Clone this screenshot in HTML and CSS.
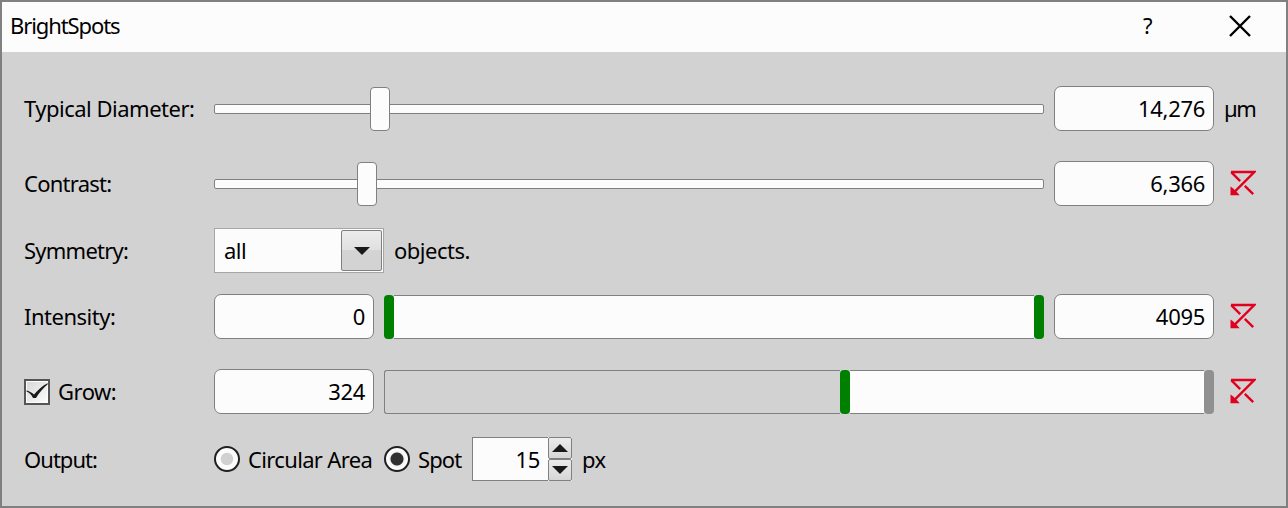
FILE: index.html
```html
<!DOCTYPE html>
<html lang="en">
<head>
<meta charset="utf-8">
<title>BrightSpots</title>
<link rel="stylesheet" href="styles.css">
</head>
<body>
<svg class="defs" width="0" height="0" aria-hidden="true">
  <symbol id="reset" viewBox="0 0 26 26">
    <path d="M1 2H24.3L5 21.300M1.200 2.200L10.200 11.200M14.800 15.800L23.200 24.200" fill="none" stroke="#e2001f" stroke-width="2.4"/>
    <path d="M.5 16.500V25.200H9.700L7.500 22.800L2.900 18.200Z" fill="#e2001f"/>
  </symbol>
</svg>
<div class="window">
  <header class="titlebar">
    <span class="title">BrightSpots</span>
    <span class="help">?</span>
    <svg class="close" width="22" height="22" viewBox="0 0 22 22"><path d="M1 1L21 21M21 1L1 21" stroke="#000" stroke-width="2.4" fill="none"/></svg>
  </header>
  <main class="form">
    <div class="row diameter">
      <label class="label t-typical">Typical Diameter:</label>
      <div class="slider"><div class="groove"></div><div class="thumb" style="left:156px"></div></div>
      <div class="field">14,276</div>
      <span class="unit">µm</span>
    </div>
    <div class="row contrast">
      <label class="label t-contrast">Contrast:</label>
      <div class="slider"><div class="groove"></div><div class="thumb" style="left:143px"></div></div>
      <div class="field">6,366</div>
      <svg class="reset"><use href="#reset"/></svg>
    </div>
    <div class="row symmetry">
      <label class="label t-symmetry">Symmetry:</label>
      <div class="combo"><span class="t-all">all</span><div class="drop"><svg width="16" height="8" viewBox="0 0 16 8"><path d="M0 0H16L8 8Z" fill="#1a1a1a"/></svg></div></div>
      <span class="t-objects">objects.</span>
    </div>
    <div class="row intensity">
      <label class="label t-intensity">Intensity:</label>
      <div class="field">0</div>
      <div class="range"><div class="handle"></div><div class="fill"></div><div class="handle"></div></div>
      <div class="field">4095</div>
      <svg class="reset"><use href="#reset"/></svg>
    </div>
    <div class="row grow">
      <label class="label check-label"><svg width="26" height="26" viewBox="0 0 26 26"><defs><linearGradient id="cb" x2="1" y2="1"><stop offset="0" stop-color="#d8d8d8"/><stop offset="1" stop-color="#fcfcfc"/></linearGradient></defs><rect x="1" y="1" width="24" height="24" fill="#fcfcfc" stroke="#555" stroke-width="2"/><rect x="3" y="3" width="20" height="20" fill="url(#cb)"/><path d="M2.5 11.5C5 12 7.5 13.5 10 15.5C14 11 18 7 23.5 4.2L24 5C19 9 15 14 12 19H9C7.500 16 5.500 13.500 2.500 12.500Z" fill="#1a1a1a"/></svg><span class="t-grow">Grow:</span></label>
      <div class="field">324</div>
      <div class="range"><div class="rest" style="width:456px"></div><div class="handle"></div><div class="fill"></div><div class="handle off"></div></div>
      <svg class="reset"><use href="#reset"/></svg>
    </div>
    <div class="row output">
      <label class="label t-output">Output:</label>
      <span class="radio"></span><span class="t-circular">Circular Area</span>
      <span class="radio on"></span><span class="t-spot">Spot</span>
      <div class="spin"><span class="value">15</span><div class="steps"><div class="step"><svg width="16" height="8" viewBox="0 0 16 8"><path d="M0 8H16L8 0Z" fill="#1a1a1a"/></svg></div><div class="step"><svg width="16" height="8" viewBox="0 0 16 8"><path d="M0 0H16L8 8Z" fill="#1a1a1a"/></svg></div></div></div>
      <span class="t-px">px</span>
    </div>
  </main>
</div>
</body>
</html>
```
FILE: styles.css
```css
* { box-sizing: border-box; }
body { margin: 0; font: 22px/45px "Noto Sans", Tahoma, sans-serif; color: #000; letter-spacing: -0.5px; white-space: nowrap; }
svg { display: block; flex: none; }
.defs { position: absolute; }
.window { width: 1288px; height: 508px; border: 2px solid #808080; background: #d2d2d2; overflow: hidden; }
.titlebar { display: flex; align-items: center; height: 50px; padding: 0 35px 2px 8px; background: #fcfcfc; line-height: 48px; }
.titlebar > span { height: 48px; line-height: 46px; }
.title { flex: 1; letter-spacing: -1.1px; }
.help { width: 86px; }
.form { padding: 34px 22px 0; }
.row { display: flex; height: 45px; }
.diameter, .intensity { margin-bottom: 30px; }
.contrast { margin-bottom: 22px; }
.symmetry { margin-bottom: 21px; }
.grow { margin-bottom: 23px; }
.label { width: 190px; flex: none; }
.t-contrast, .t-symmetry { letter-spacing: -0.75px; }
.t-output { letter-spacing: -0.95px; }
.field { width: 160px; height: 45px; flex: none; border: 1px solid #808080; border-radius: 7px; background: #fcfcfc; text-align: right; padding-right: 8px; line-height: 43px; letter-spacing: -0.3px; }
.unit { margin-left: 10px; letter-spacing: -1.5px; }
.slider { position: relative; width: 830px; margin-right: 10px; padding-top: 18px; }
.groove { height: 10px; border: 1px solid #808080; border-radius: 2px; background: #fcfcfc; }
.thumb { position: absolute; top: 1px; width: 20px; height: 44px; border: 1px solid #808080; border-radius: 4px; background: #fcfcfc; }
.reset { width: 26px; height: 26px; margin: 9px 0 0 16px; }
.combo { display: flex; width: 170px; height: 45px; margin-right: 10px; padding: 1px; border: 1px solid #a6a6a6; background: #fcfcfc; line-height: 41px; }
.t-all { flex: 1; padding-left: 8px; line-height: 41px; }
.drop { display: flex; align-items: center; justify-content: center; width: 41px; height: 41px; border: 1px solid #808080; border-radius: 2px; background: linear-gradient(#ececec, #e0e0e0 49%, #d4d4d4 50%, #d2d2d2); }
.range { display: flex; height: 44px; margin: 1px 0 0 10px; }
.intensity .range { flex: 0 0 660px; margin-right: 10px; }
.grow .range { flex: 0 0 830px; }
.handle { width: 10px; height: 44px; border-radius: 4px; background: #008000; }
.off { background: #909090; }
.fill, .rest { border: solid #808080; border-width: 1px 0; }
.fill { flex: 1; background: #fcfcfc; }
.rest { border-left-width: 1px; border-radius: 3px 0 0 3px; }
.check-label { display: flex; align-items: center; gap: 8px; }
.radio { display: block; width: 26px; height: 26px; margin: 9px 8px 0 0; border: 2px solid #202020; border-radius: 50%; background: radial-gradient(circle, #d1d1d1 0 5.7px, #fcfcfc 6.700px); flex: none; }
.on { background: radial-gradient(circle at 50% 50%, #303030 0 6px, #f4f4f4 7px 8px, #fcfcfc 9px); }
.t-circular { width: 136px; letter-spacing: -0.65px; }
.t-spot { width: 54px; letter-spacing: -0.9px; }
.spin { display: flex; width: 100px; height: 44px; margin-right: 10px; background: #fcfcfc; line-height: 43px; }
.value { width: 76px; border: 1px solid #808080; border-right: 0; padding-right: 8px; text-align: right; letter-spacing: -0.3px; }
.steps { width: 24px; }
.step { display: flex; height: 22px; align-items: center; justify-content: center; border: 1px solid #808080; border-radius: 2px; background: linear-gradient(#ececec, #d6d6d6); }
```
